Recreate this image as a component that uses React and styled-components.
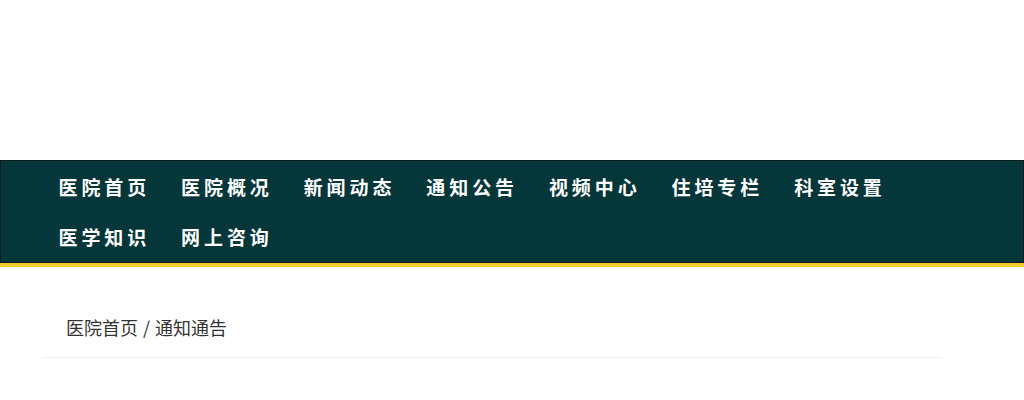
import React from 'react';
import styled, { createGlobalStyle } from 'styled-components';

const GlobalStyle = createGlobalStyle`
	html, body {
		margin: 0;
		padding: 0;
		background: #fff;
		font-family: "Noto Sans CJK SC", "Noto Sans", sans-serif;
	}
	ul {
		margin: 0;
		padding: 0;
		list-style: none;
	}
`;

const menu = [
	'医院首页',
	'医院概况',
	'新闻动态',
	'通知公告',
	'视频中心',
	'住培专栏',
	'科室设置',
	'医学知识',
	'网上咨询',
];

export default function App() {
	return (
		<>
			<GlobalStyle />
			<Header />
			<NavBar>
				<Container>
					<Menu>
						{menu.map((item) => (
							<MenuItem key={item}>
								<a href="#">{item}</a>
							</MenuItem>
						))}
					</Menu>
				</Container>
			</NavBar>
			<YellowBar />
			<Container>
				<Breadcrumb>
					<a href="#">医院首页</a>
					<Sep>/</Sep>
					<span>通知通告</span>
				</Breadcrumb>
			</Container>
		</>
	);
}

const Header = styled.div`
	height: 160px;
	background: #fff;
`;

const NavBar = styled.nav`
	background: #04363a;
	border: 1px solid #0c1c1c;
	padding-top: 1px;
`;

const Container = styled.div`
	width: 900px;
	margin-left: 42px;
`;

const Menu = styled.ul`
	display: flex;
	flex-wrap: wrap;
`;

const MenuItem = styled.li`
	padding: 0 15.5px 0 15.5px;
	line-height: 50px;
	height: 50px;

	a {
		color: #fff;
		text-decoration: none;
		font-size: 19px;
		font-weight: 700;
		letter-spacing: 3.9px;
		white-space: nowrap;
	}
`;

const YellowBar = styled.div`
	height: 4px;
	background: #f1cb27;
`;

const Breadcrumb = styled.div`
	margin-top: 30px;
	padding-left: 24px;
	line-height: 60px;
	height: 60px;
	border-bottom: 1px solid #eeeeee;
	font-size: 18px;
	color: #333;

	a {
		color: #333;
		text-decoration: none;
	}
`;

const Sep = styled.span`
	margin: 0 5px;
`;
